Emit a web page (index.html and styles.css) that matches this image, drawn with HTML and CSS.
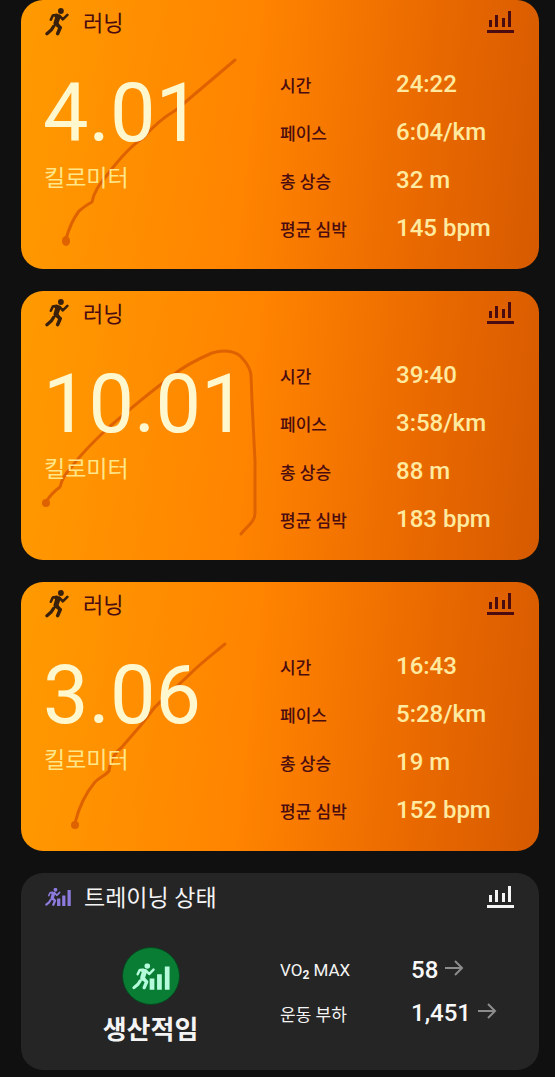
FILE: index.html
```html
<!DOCTYPE html>
<html lang="ko">
<head>
<meta charset="utf-8">
<meta name="viewport" content="width=device-width, initial-scale=1">
<title>러닝</title>
<link rel="stylesheet" href="styles.css">
</head>
<body>
<svg class="defs" aria-hidden="true">
  <symbol id="runner" viewBox="0 0 74 86">
    <circle cx="49" cy="9" r="9" fill="currentColor"/>
    <path d="M24 18L44 19L49 26L42 46L46 54L28 57L26 46L31 29Z" fill="currentColor"/>
    <g fill="none" stroke="currentColor" stroke-linejoin="round" stroke-linecap="round">
      <path d="M36 21L24 23L18 36" stroke-width="8"/>
      <path d="M45 24L55 35L69 21" stroke-width="8"/>
      <path d="M34 49L47 60L39 79" stroke-width="11"/>
      <path d="M26 57L19 68L6 79" stroke-width="10"/>
    </g>
  </symbol>
  <symbol id="bars" viewBox="0 0 28 24">
    <path d="M3 10h3v7H3zM9 5h3v12H9zM16 8h3v9h-3zM22 1h3v16h-3zM1 20h27v3H1z" fill="currentColor"/>
  </symbol>
  <symbol id="progress" viewBox="0 0 112 80">
    <svg x="0" y="0" width="68" height="80" viewBox="0 0 74 86"><use href="#runner" width="74" height="86"/></svg>
    <path d="M52 46h14v33H52zM74 33h14v46H74zM97 10h14v69H97z" fill="currentColor"/>
  </symbol>
  <symbol id="arrow" viewBox="0 0 20 18">
    <path d="M1 9h17M11 2l7 7-7 7" fill="none" stroke="currentColor" stroke-width="2"/>
  </symbol>
</svg>

<main class="feed">
  <article class="card run">
    <svg class="route" viewBox="0 0 259 269" aria-hidden="true">
      <path d="M45 239C48 228 52 219 58 211C63 207 67 204 71 202C73 192 78 185 86 175C99 158 111 145 122 138C134 124 143 117 155 110L214 60"/>
      <ellipse cx="45" cy="241" rx="4" ry="5"/>
    </svg>
    <header class="head">
      <svg class="runner"><use href="#runner"/></svg>
      <h2 class="title">러닝</h2>
      <button class="chart" type="button" aria-label="통계"><svg><use href="#bars"/></svg></button>
    </header>
    <div class="body">
      <div class="distance"><p class="number">4.01</p><p class="unit">킬로미터</p></div>
      <dl class="stats">
        <dt>시간</dt><dd>24:22</dd>
        <dt>페이스</dt><dd>6:04/km</dd>
        <dt>총 상승</dt><dd>32 m</dd>
        <dt>평균 심박</dt><dd>145 bpm</dd>
      </dl>
    </div>
  </article>

  <article class="card run">
    <svg class="route" viewBox="0 0 259 269" aria-hidden="true">
      <path d="M25 211C28 206 32 201 39 196C41 188 44 183 49 178C57 167 70 153 86 138C110 117 132 99 151 85C164 74 177 68 191 62C204 58 216 60 222 68Q229 76 230 84L231 110L234 170V222C234 231 226 235 220 243"/>
      <circle cx="25" cy="212" r="4"/>
    </svg>
    <header class="head">
      <svg class="runner"><use href="#runner"/></svg>
      <h2 class="title">러닝</h2>
      <button class="chart" type="button" aria-label="통계"><svg><use href="#bars"/></svg></button>
    </header>
    <div class="body">
      <div class="distance"><p class="number">10.01</p><p class="unit">킬로미터</p></div>
      <dl class="stats">
        <dt>시간</dt><dd>39:40</dd>
        <dt>페이스</dt><dd>3:58/km</dd>
        <dt>총 상승</dt><dd>88 m</dd>
        <dt>평균 심박</dt><dd>183 bpm</dd>
      </dl>
    </div>
  </article>

  <article class="card run">
    <svg class="route" viewBox="0 0 259 269" aria-hidden="true">
      <path d="M54 241C58 225 64 212 74 200C79 195 84 194 88 189C89 178 94 171 101 165L120 143L134 125C147 112 161 100 169 92C181 80 192 72 204 62"/>
      <circle cx="54" cy="243" r="4"/>
    </svg>
    <header class="head">
      <svg class="runner"><use href="#runner"/></svg>
      <h2 class="title">러닝</h2>
      <button class="chart" type="button" aria-label="통계"><svg><use href="#bars"/></svg></button>
    </header>
    <div class="body">
      <div class="distance"><p class="number">3.06</p><p class="unit">킬로미터</p></div>
      <dl class="stats">
        <dt>시간</dt><dd>16:43</dd>
        <dt>페이스</dt><dd>5:28/km</dd>
        <dt>총 상승</dt><dd>19 m</dd>
        <dt>평균 심박</dt><dd>152 bpm</dd>
      </dl>
    </div>
  </article>

  <article class="card training">
    <header class="head">
      <svg class="mini"><use href="#progress"/></svg>
      <h2 class="title">트레이닝 상태</h2>
      <button class="chart" type="button" aria-label="통계"><svg><use href="#bars"/></svg></button>
    </header>
    <div class="body">
      <div class="status">
        <span class="badge"><svg><use href="#progress"/></svg></span>
        <p class="state">생산적임</p>
      </div>
      <dl class="stats">
        <dt>VO<sub>2</sub> MAX</dt><dd>58<svg class="arrow"><use href="#arrow"/></svg></dd>
        <dt>운동 부하</dt><dd>1,451<svg class="arrow"><use href="#arrow"/></svg></dd>
      </dl>
    </div>
  </article>
</main>
</body>
</html>
```
FILE: styles.css
```css
* { box-sizing: border-box; }

body {
  margin: 0;
  background: #101010;
  font-family: Roboto, "Noto Sans CJK KR", sans-serif;
}

h2, p, dl, dd { margin: 0; }

.defs { position: absolute; width: 0; height: 0; }

.feed {
  display: flex;
  flex-direction: column;
  gap: 22px;
  padding: 0 16px 6px 21px;
}

.card {
  position: relative;
  border-radius: 22px;
  overflow: hidden;
}

.run {
  padding-bottom: 17px;
  background: linear-gradient(96deg, #ff9a00 0%, #ff8400 44%, #f87a00 56%, #e86800 78%, #d65a00 100%);
  color: #4a0c10;
}

.training {
  padding-bottom: 22px;
  background: #252525;
  color: #f4f4f4;
}

.route {
  position: absolute;
  top: 0;
  left: 0;
  width: 259px;
  height: 269px;
}
.route path { fill: none; stroke: #df6200; stroke-width: 3; stroke-linecap: round; stroke-linejoin: round; }
.route circle, .route ellipse { fill: #df6200; }

.head {
  position: relative;
  display: flex;
  align-items: center;
  height: 44px;
  padding: 0 25px 0 24px;
}
.training .head { height: 47px; }
.runner { width: 24px; height: 28px; margin-right: 14px; color: #38200c; }
.mini { width: 26px; height: 20px; margin-right: 13px; color: #8c7bdc; }
.title {
  flex: 1;
  padding-top: 4px;
  font-size: 22px;
  font-weight: 400;
  line-height: 32px;
}
.training .title { font-size: 23px; }
.chart {
  display: flex;
  padding: 0;
  border: 0;
  background: none;
  color: inherit;
  cursor: pointer;
}
.chart svg { width: 28px; height: 24px; }

.body {
  position: relative;
  display: grid;
  grid-template-columns: 1fr 1fr;
}

.distance { padding: 22px 0 0 22px; }
.number {
  color: #fff8cf;
  font-size: 81px;
  line-height: 96px;
}
.unit {
  padding: 1px 0 0 1px;
  color: #ffe68a;
  font-size: 23px;
  line-height: 32px;
}

.stats {
  display: grid;
  grid-template-columns: 116px 1fr;
  grid-auto-rows: 48px;
  align-items: center;
  padding-top: 16px;
  white-space: nowrap;
}
.stats dt { font-size: 17px; font-weight: 500; }
.stats dd {
  color: #ffeaa0;
  font-size: 24px;
  font-weight: 500;
}

.status {
  display: flex;
  flex-direction: column;
  align-items: center;
  padding-top: 27px;
}
.badge {
  display: grid;
  place-items: center;
  width: 58px;
  height: 58px;
  border: 1px solid #06451f;
  border-radius: 50%;
  background: #0a7d35;
  color: #b4fbdc;
}
.badge svg { width: 38px; height: 27px; }
.state {
  margin-top: 7px;
  font-size: 26px;
  font-weight: 700;
  line-height: 36px;
}

.training .stats {
  grid-template-columns: 131px 1fr;
  grid-auto-rows: 43px;
  padding-top: 28px;
}
.training dt { padding-top: 2px; font-weight: 400; }
.training sub { font-size: 12px; font-weight: 700; line-height: 1; vertical-align: -3px; }
.training dd {
  display: flex;
  align-items: center;
  gap: 6px;
  color: #f8f8f8;
}
.arrow { width: 20px; height: 18px; margin-bottom: 3px; color: #8c8c8c; }
```
